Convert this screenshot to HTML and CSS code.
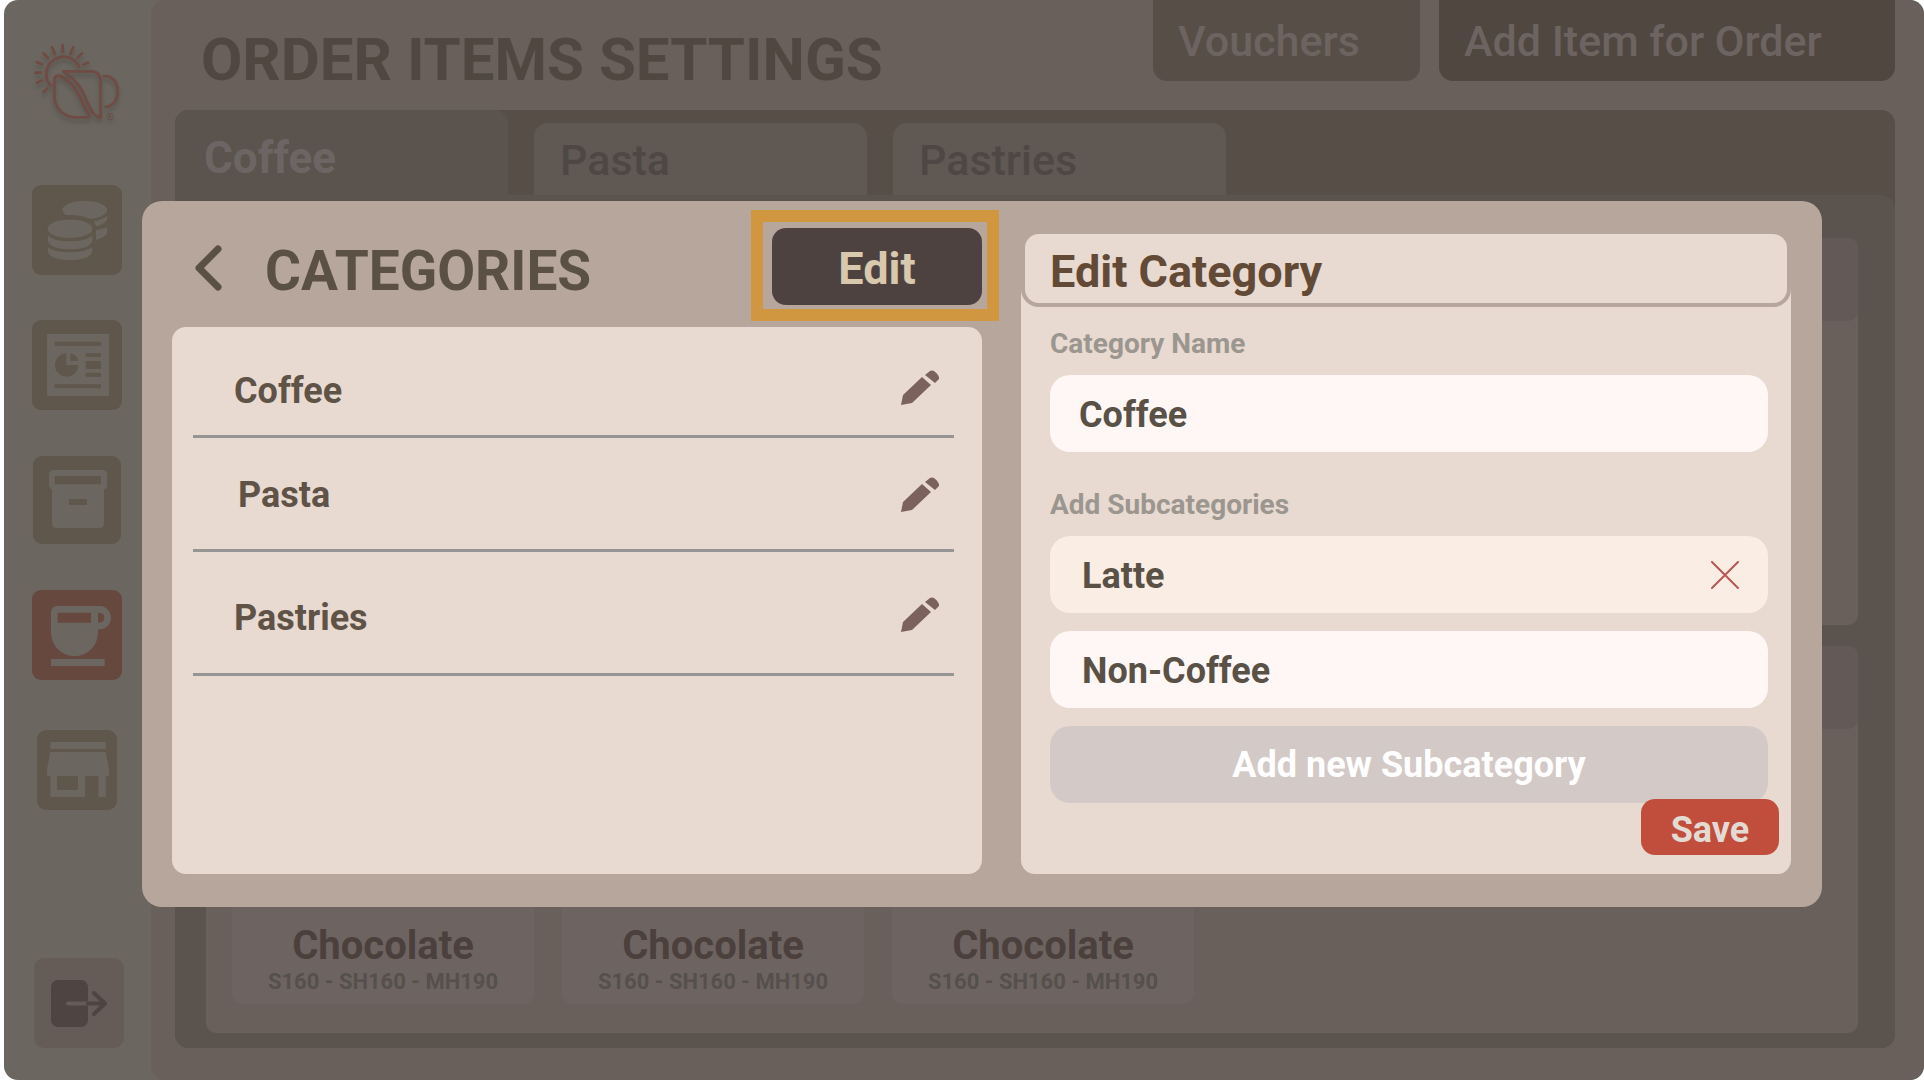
FILE: index.html
```html
<!DOCTYPE html>
<html lang="en">
<head>
<meta charset="utf-8">
<title>Order Items Settings</title>
<link rel="stylesheet" href="styles.css">
</head>
<body>
<div class="app">
  <aside class="sidebar">
    <svg class="logo" viewBox="99 129 267 246" aria-hidden="true">
      <g class="logo-lines">
        <path d="M154 259A52 52 0 1 1 239 203"/>
        <path d="M188 132v27M155 139l11 25M221 139l-11 25M128 158l19 18M248 158l-18 18M108 185l22 9M267 187l-21 9M103 218h23M108 249l22-9M128 278l16-15"/>
        <path d="M190 214H272Q302 214 302 246V352Q292 352 283 343C262 318 258 290 240 262Q222 235 190 214Z"/>
        <path d="M163 241C163 226 176 223 190 233C245 270 241 310 266 340Q270 351 258 352H226C188 350 163 322 163 285Z"/>
        <path d="M308 229C338 224 353 248 353 274C353 302 338 319 314 321"/>
      </g>
      <circle class="logo-mark" cx="330" cy="350" r="10"/>
      <path class="logo-mark" d="M327 355v-10h4q3 3 0 5h-4M331 350l3 5"/>
    </svg>
    <nav class="nav" aria-label="Main">
      <a class="slot" href="#sales" aria-label="Sales"><svg class="tile" viewBox="96 555 273 273" width="90" height="90">
        <g class="glyph"><ellipse cx="256" cy="631" rx="68" ry="28"/>
        <path d="M324 648v10q-6 17-44 25q-4-12-18-16q45-2 62-19zM324 684v10q-6 12-34 18v-20q22-4 34-8zM290 705q26-5 34-15v10q-4 16-34 21z"/></g>
        <ellipse class="cut" cx="211" cy="680" rx="79" ry="34"/>
        <g class="glyph"><ellipse cx="211" cy="688" rx="68" ry="28"/>
        <path d="M144 708q18 18 67 18t68-18v16q-8 26-68 26t-67-26zM144 743q18 16 67 16t68-16v14q-8 26-68 26t-67-26z"/></g>
      </svg></a>
      <a class="slot" href="#reports" aria-label="Reports"><svg class="tile" viewBox="96 63 270 270" width="90" height="90">
        <path class="glyph" d="M141 105h186v186H141z"/>
        <path class="cut" d="M164 128h139v12H164zM164 256h139v12H164zM257 163h46v11h-46zM257 186h46v24h-46zM257 221h46v12h-46zM199 163v35h36a35 35 0 1 1-36-35zM211 163q20 4 24 23h-24z"/>
      </svg></a>
      <a class="slot" href="#inventory" aria-label="Inventory"><svg class="tile" viewBox="96 474 264 264" width="88" height="88">
        <path class="glyph" d="M158 516H304Q318 516 318 530V562Q318 571 309 575V676Q309 690 295 690H167Q153 690 153 676V575Q144 571 144 562V530Q144 516 158 516Z"/>
        <path class="cut" d="M161 534h139v25H161zM204 603h54v18h-54z"/>
      </svg></a>
      <a class="slot" href="#items" aria-label="Order items" aria-current="page"><svg class="tile tile-on" viewBox="96 87 270 270" width="90" height="90">
        <path class="glyph" d="M173 135H298A35 35 0 0 1 298 205H294V215A70 70 0 0 1 153 215V155Q153 135 173 135ZM153 294H314V315H153Z"/>
        <path class="cut-on" d="M173 155h100v30H173zM294 155q19 0 19 15t-19 15z"/>
      </svg></a>
      <a class="slot" href="#store" aria-label="Store"><svg class="tile" viewBox="108 510 240 240" width="80" height="80">
        <path class="glyph" d="M148 546H314V567H148ZM148 576H314L324 628V648H314V711H292V648H252V711H148V648H138V628Z"/>
        <path class="cut" d="M168 648h63v42h-63z"/>
      </svg></a>
    </nav>
    <button class="logout" type="button" aria-label="Log out"><svg viewBox="34 958 90 90" width="90" height="90">
      <rect class="door" x="51" y="980" width="37" height="47" rx="7"/>
      <path class="bar-in" d="M68 1003.500H88"/>
      <path class="bar-out" d="M88 1003.500H105M94 993L105 1003.500L94 1014"/>
    </svg></button>
  </aside>

  <main class="main">
    <header class="topbar">
      <h1 class="title">ORDER ITEMS SETTINGS</h1>
      <div class="actions">
        <button class="action action-vouchers" type="button">Vouchers</button>
        <button class="action action-add" type="button">Add Item for Order</button>
      </div>
    </header>
    <section class="board">
      <nav class="tabs" aria-label="Item categories">
        <a class="tab tab-current" href="#coffee">Coffee</a>
        <a class="tab" href="#pasta">Pasta</a>
        <a class="tab" href="#pastries">Pastries</a>
      </nav>
      <div class="content">
        <section class="group"><div class="group-head"></div></section>
        <section class="group">
          <div class="group-head"></div>
          <div class="items">
            <article class="item"><h2 class="item-name">Chocolate</h2><p class="item-price">S160 - SH160 - MH190</p></article>
            <article class="item"><h2 class="item-name">Chocolate</h2><p class="item-price">S160 - SH160 - MH190</p></article>
            <article class="item"><h2 class="item-name">Chocolate</h2><p class="item-price">S160 - SH160 - MH190</p></article>
          </div>
        </section>
      </div>
    </section>
  </main>

  <div class="overlay">
    <div class="modal" role="dialog" aria-labelledby="modal-title">
      <section class="left">
        <header class="left-head">
          <button class="back" type="button" aria-label="Back"><svg viewBox="0 0 28 46" width="28" height="46"><path d="M24 4L5 23L24 42"/></svg></button>
          <h2 class="modal-title" id="modal-title">CATEGORIES</h2>
          <div class="edit-wrap"><button class="edit" type="button">Edit</button></div>
        </header>
        <ul class="list">
          <li class="row row-first"><span class="row-name">Coffee</span><button class="pencil" type="button" aria-label="Edit Coffee"><svg viewBox="0 0 38 36" width="38" height="36"><path d="M0 35L2 25L21 7L30 15L11 33ZM24 5L29 1Q31 0 33 1Q37 4 38 7V9L34 13Z"/></svg></button></li>
          <li class="row row-second"><span class="row-name row-name-in">Pasta</span><button class="pencil" type="button" aria-label="Edit Pasta"><svg viewBox="0 0 38 36" width="38" height="36"><path d="M0 35L2 25L21 7L30 15L11 33ZM24 5L29 1Q31 0 33 1Q37 4 38 7V9L34 13Z"/></svg></button></li>
          <li class="row row-third"><span class="row-name">Pastries</span><button class="pencil" type="button" aria-label="Edit Pastries"><svg viewBox="0 0 38 36" width="38" height="36"><path d="M0 35L2 25L21 7L30 15L11 33ZM24 5L29 1Q31 0 33 1Q37 4 38 7V9L34 13Z"/></svg></button></li>
        </ul>
      </section>
      <section class="right">
        <h2 class="right-title">Edit Category</h2>
        <form class="form">
          <label class="label" for="cat-name">Category Name</label>
          <input class="field" id="cat-name" type="text" value="Coffee">
          <label class="label label-sub" for="sub-1">Add Subcategories</label>
          <div class="fields">
            <div class="field-row">
              <input class="field-text" id="sub-1" type="text" value="Latte">
              <button class="remove" type="button" aria-label="Remove Latte"><svg viewBox="0 0 30 28" width="30" height="28"><path d="M2 1L28 27M28 1L2 27"/></svg></button>
            </div>
            <input class="field field-in" type="text" value="Non-Coffee" aria-label="Subcategory">
            <button class="add-sub" type="button">Add new Subcategory</button>
          </div>
          <button class="save" type="button">Save</button>
        </form>
      </section>
    </div>
  </div>
</div>
</body>
</html>
```
FILE: styles.css
```css
* { box-sizing: border-box; }

body {
  margin: 0;
  background: #fff;
  font-family: Roboto, "Liberation Sans", sans-serif;
}

h1, h2, p, ul { margin: 0; padding: 0; }
ul { list-style: none; }
a { color: inherit; text-decoration: none; }
button, input {
  border: 0;
  padding: 0;
  margin: 0;
  background: none;
  font: inherit;
  color: inherit;
}
svg { display: block; }

.app {
  position: relative;
  display: flex;
  min-height: 100vh;
  margin-left: 4px;
  border-radius: 14px;
  overflow: hidden;
  background: #6b6760;
}

/* Sidebar */
.sidebar {
  display: flex;
  flex-direction: column;
  flex: none;
  width: 147px;
  padding: 43px 28px 32px;
}
.logo {
  width: 89px;
  height: 82px;
  margin-left: 1px;
  filter: drop-shadow(0 4px 2px rgba(60, 50, 50, 0.4));
}
.logo-lines { fill: none; stroke: #704b43; stroke-width: 8; stroke-linejoin: round; }
.logo-mark { fill: none; stroke: #67493f; stroke-width: 2; }
.nav { display: flex; flex-direction: column; gap: 45px; margin-top: 60px; }
.slot { display: flex; align-items: center; justify-content: center; width: 90px; height: 90px; }
.tile { border-radius: 9px; background: #5f564c; }
.tile-on { background: #66483f; }
.glyph { fill: #6b6760; }
.cut { fill: #5f564c; }
.cut-on { fill: #66483f; }
.logout { width: 90px; margin: auto 0 0 2px; border-radius: 10px; background: #655c57; }
.door { fill: #4e4441; }
.bar-in, .bar-out { fill: none; stroke-width: 4; stroke-linecap: round; stroke-linejoin: round; }
.bar-in { stroke: #655c57; }
.bar-out { stroke: #4e4441; }

/* Main page */
.main {
  display: flex;
  flex-direction: column;
  flex: 1;
  min-width: 0;
  padding: 0 29px 32px 24px;
  border-radius: 14px;
  background: #69605b;
}
.topbar { display: flex; justify-content: space-between; height: 110px; }
.title { padding: 25px 0 0 26px; font-size: 60px; line-height: 70px; font-weight: 700; color: #504741; white-space: nowrap; }
.actions { display: flex; gap: 19px; height: 81px; }
.action {
  padding: 0 25px;
  border-radius: 0 0 14px 14px;
  font-size: 43px;
  font-weight: 500;
  text-align: left;
  white-space: nowrap;
  color: #6d6461;
}
.action-vouchers { width: 267px; background: #574e48; }
.action-add { width: 456px; background: #504741; }
.board { display: flex; flex-direction: column; flex: 1; border-radius: 14px; background: #574e48; }
.tabs { display: flex; align-items: flex-end; gap: 26px; height: 85px; }
.tab {
  width: 333px;
  height: 72px;
  padding: 0 26px;
  border-radius: 14px 14px 0 0;
  background: #605853;
  font-size: 43px;
  line-height: 74px;
  font-weight: 500;
  color: #4d4843;
}
.tab-current { height: 85px; padding: 0 29px; line-height: 96px; background: #5b534d; font-size: 44px; font-weight: 700; color: #6b6664; }
.content {
  display: flex;
  flex-direction: column;
  flex: 1;
  gap: 21px;
  padding: 43px 37px 15px 31px;
  border-radius: 0 14px 14px 14px;
  background: #5b534d;
}
.group { display: flex; flex-direction: column; justify-content: space-between; flex: 1; border-radius: 10px; background: #69605b; }
.group-head { height: 83px; border-radius: 10px; background: #635957; }
.items { display: flex; gap: 28px; padding: 0 26px 29px; }
.item {
  flex: 0 1 302px;
  padding: 184px 0 9px;
  border-radius: 10px;
  background: #6d6462;
  text-align: center;
}
.item-name { font-size: 40px; line-height: 46px; font-weight: 700; color: #4c403d; }
.item-price { font-size: 22px; line-height: 26px; font-weight: 700; color: #55504b; }

/* Categories dialog */
.overlay { position: absolute; inset: 0; padding: 201px 102px 0 138px; }
.modal {
  display: grid;
  grid-template-columns: 810fr 770fr;
  gap: 39px;
  padding: 27px 31px 33px 30px;
  border-radius: 20px;
  background: #b7a69c;
}
.left { display: flex; flex-direction: column; gap: 22px; }
.left-head { display: flex; align-items: center; height: 77px; padding-left: 22px; }
.back { padding-top: 3px; }
.back path { fill: none; stroke: #5b5044; stroke-width: 7; stroke-linecap: round; stroke-linejoin: round; }
.modal-title { padding: 8px 0 0 43px; font-size: 55px; line-height: 64px; font-weight: 700; color: #5b5044; }
.edit-wrap { position: relative; margin-left: auto; }
.edit-wrap::after {
  content: "";
  position: absolute;
  inset: -18px -17px -16px -21px;
  border: 12px solid #d09740;
  pointer-events: none;
}
.edit { width: 210px; height: 77px; padding-top: 3px; border-radius: 14px; background: #4e4240; font-size: 45px; font-weight: 700; color: #d8c8ae; }
.list { flex: 1; padding: 13px 28px 0 21px; border-radius: 14px; background: #e8dad1; }
.row {
  display: flex;
  align-items: center;
  justify-content: space-between;
  padding: 0 15px 0 41px;
  border-bottom: 3px solid #969594;
}
.row-first { height: 98px; }
.row-second { height: 114px; padding-top: 3px; }
.row-third { height: 124px; padding-top: 4px; }
.row-name { padding-top: 6px; font-size: 36px; line-height: 44px; font-weight: 700; color: #5f5246; }
.row-name-in { padding-top: 0; padding-left: 4px; }
.pencil path { fill: #7c625d; }

.right {
  margin-top: 2px;
  border-radius: 14px;
  background: linear-gradient(#b7a69c 60px, #e8dad1 60px);
}
.right-title {
  height: 77px;
  padding-left: 25px;
  border: 4px solid #b7a69c;
  border-radius: 18px;
  background: #e8dad1;
  font-size: 45px;
  line-height: 75px;
  font-weight: 700;
  color: #634a36;
}
.form { display: flex; flex-direction: column; padding: 21px 23px 19px 29px; }
.label { margin-bottom: 15px; font-size: 28px; line-height: 32px; font-weight: 700; color: #9b968f; }
.label-sub { margin-top: 37px; }
.fields { display: flex; flex-direction: column; gap: 18px; }
.field, .field-row, .add-sub { height: 77px; border-radius: 20px; font-size: 36px; font-weight: 700; }
.field { width: 100%; padding: 2px 29px 0; background: #fef7f5; color: #595046; }
.field-in { padding: 2px 32px 0; }
.field-row { display: flex; align-items: center; padding: 0 28px 0 32px; background: #faede4; color: #595046; }
.field-text { flex: 1; min-width: 0; padding-top: 3px; }
.remove path { fill: none; stroke: #b95656; stroke-width: 2; stroke-linecap: round; }
.add-sub { background: #d3cac7; color: #fff; }
.save {
  align-self: flex-end;
  width: 138px;
  height: 56px;
  margin: -4px -11px 0 0;
  padding-top: 6px;
  border-radius: 14px;
  background: #c14e3c;
  font-size: 36px;
  font-weight: 700;
  color: #e3dbd3;
}
```
